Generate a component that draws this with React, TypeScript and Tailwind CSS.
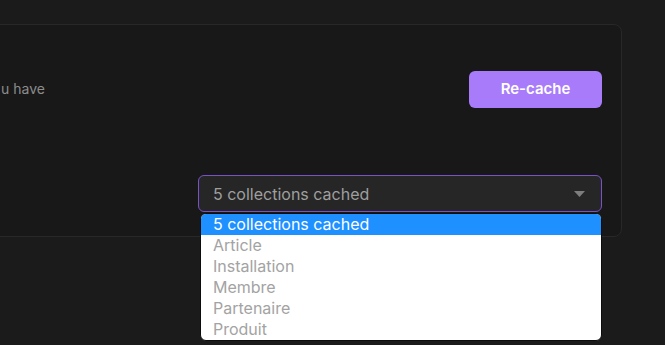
import React from "react";

export default function App() {
  const items = ["Article", "Installation", "Membre", "Partenaire", "Produit"];
  return (
    <div
      className="relative h-[345px] w-[665px] overflow-hidden bg-[#1b1b1b]"
      style={{ fontFamily: "Inter, 'Noto Sans', sans-serif" }}
    >
      <div className="ml-[-20px] mt-[24px] h-[213px] w-[642px] rounded-lg border border-[#282828] bg-[#181818] pl-[20px] pr-[19px] pt-[46px]">
        <div className="flex items-center justify-between">
          <p className="text-[14px] text-[#8c8c8c] leading-5 -mt-[2px]">u have</p>
          <button className="h-[37px] w-[133px] rounded-md bg-[#a87bfa] text-[15px] font-semibold text-white">
            Re-cache
          </button>
        </div>
        <div className="mt-[67px] flex justify-end">
          <div className="relative w-[404px]">
            <div className="flex h-[37px] items-center justify-between rounded-md border border-[#7a52c7] bg-[#262626] pl-[14px] pr-[16px]">
              <span className="text-[16px] text-[#9f9f9f]">5 collections cached</span>
              <svg width="11" height="6" viewBox="0 0 11 6">
                <path d="M0 0 L11 0 L5.5 6 Z" fill="#7d7d7d" />
              </svg>
            </div>
            <div className="absolute left-[2px] top-[38px] w-[402px] overflow-hidden rounded-md border border-[#0c0c0c] bg-white">
              <div className="h-[21px] bg-[#1e90ff] pl-[12px] text-[16px] leading-[21px] text-white">
                5 collections cached
              </div>
              {items.map((it) => (
                <div key={it} className="h-[21px] pl-[12px] text-[16px] leading-[21px] text-[#a3a3a3]">
                  {it}
                </div>
              ))}
            </div>
          </div>
        </div>
      </div>
    </div>
  );
}
